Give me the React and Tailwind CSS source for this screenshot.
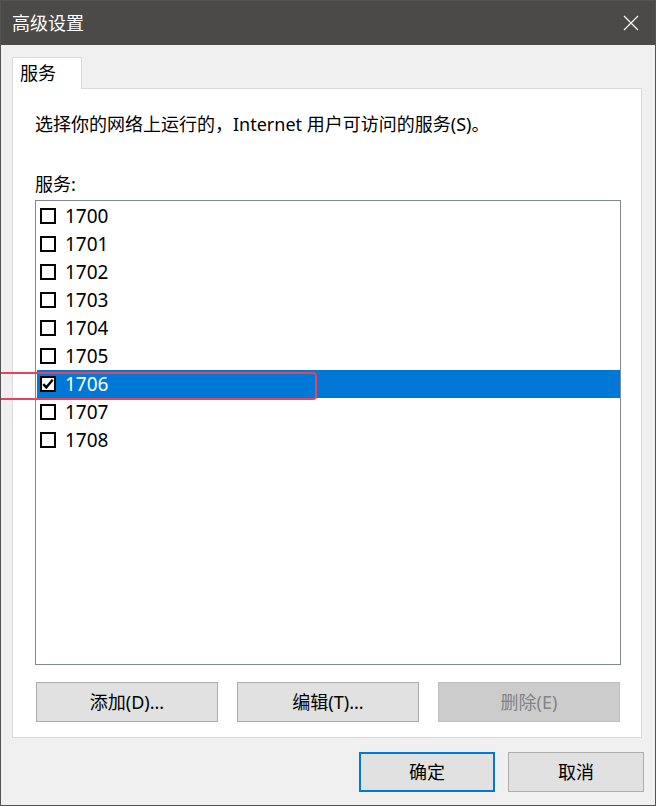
import React from "react";

const ports = ["1700", "1701", "1702", "1703", "1704", "1705", "1706", "1707", "1708"];
const selectedPort = "1706";

// ================= CHECKBOX =================
const CheckBox = ({ checked }) => (
  <span className="w-[16px] h-[16px] border-2 border-black bg-white flex items-center justify-center shrink-0">
    {checked && (
      <svg width="12" height="12" viewBox="0 0 11 11">
        <path d="M1.2 5.6 L4 8.6 L9.8 1.6" fill="none" stroke="#000" strokeWidth="2.2" />
      </svg>
    )}
  </span>
);

// ================= BUTTON =================
const DlgButton = ({ children, disabled, primary, className = "" }) => (
  <button
    className={`flex items-center justify-center text-[18px] ${
      disabled
        ? "bg-[#cccccc] border border-[#bfbfbf] text-[#838383]"
        : primary
        ? "bg-[#e1e1e1] border-2 border-[#0078d7] text-black"
        : "bg-[#e1e1e1] border border-[#adadad] text-black"
    } ${className}`}
  >
    {children}
  </button>
);

// ================= APP =================
export default function App() {
  return (
    <div className="relative w-[656px] h-[806px] overflow-hidden border border-[#555452] bg-[#f0f0f0] flex flex-col font-['Noto_Sans','Noto_Sans_CJK_SC',sans-serif]">
      {/* TITLE BAR */}
      <div className="h-[44px] bg-[#4b4a48] flex items-center justify-between pl-[11px] pr-[16px] shrink-0">
        <span className="text-white text-[18px]">高级设置</span>
        <svg width="16" height="16" viewBox="0 0 16 16">
          <path d="M1 1 L15 15 M15 1 L1 15" stroke="#fff" strokeWidth="1.2" />
        </svg>
      </div>

      {/* BODY */}
      <div className="flex-1 flex flex-col px-[11px] pt-[12px]">
        <div className="flex">
          <div className="relative z-10 -mb-px w-[70px] h-[32px] bg-white border border-b-0 border-[#d9d9d9] pl-[7px] flex items-center text-[18px] text-black">
            服务
          </div>
        </div>

        <div className="w-[630px] h-[650px] border border-[#d9d9d9] bg-white pl-[22px] flex flex-col">
          <p className="mt-[23px] text-[18px] leading-[24px] text-black">
            选择你的网络上运行的，Internet 用户可访问的服务(S)。
          </p>
          <p className="mt-[36px] text-[18px] leading-[24px] text-black">服务:</p>

          <div className="mt-[4px] w-[586px] h-[465px] border border-[#828790] bg-white pt-[1px] pl-[1px]">
            {ports.map((p) => {
              const sel = p === selectedPort;
              return (
                <div
                  key={p}
                  className={`h-[28px] flex items-center gap-[9px] pl-[3px] ${
                    sel ? "bg-[#0078d7] text-white" : "text-black"
                  }`}
                >
                  <CheckBox checked={sel} />
                  <span className="text-[19px] leading-none">{p}</span>
                </div>
              );
            })}
          </div>

          <div className="mt-[17px] ml-[1px] flex gap-[19px]">
            <DlgButton className="w-[182px] h-[40px]">添加(D)...</DlgButton>
            <DlgButton className="w-[182px] h-[40px]">编辑(T)...</DlgButton>
            <DlgButton className="w-[182px] h-[40px]" disabled>
              删除(E)
            </DlgButton>
          </div>
        </div>

        <div className="mt-[14px] flex justify-end gap-[13px]">
          <DlgButton primary className="w-[136px] h-[40px]">确定</DlgButton>
          <DlgButton className="w-[136px] h-[40px]">取消</DlgButton>
        </div>
      </div>

      {/* annotation outline */}
      <div className="absolute left-[-6px] top-[371px] w-[322px] h-[28px] border-2 border-[#e5435e] rounded-[4px] pointer-events-none" />
    </div>
  );
}
